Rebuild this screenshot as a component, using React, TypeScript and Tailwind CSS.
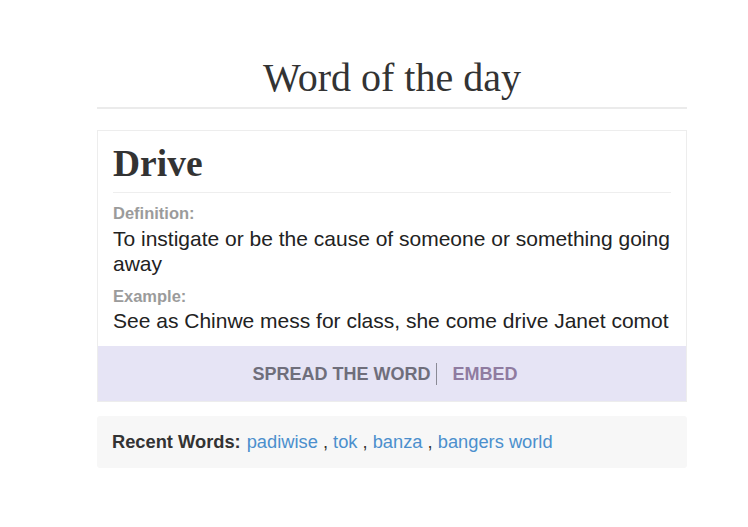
import React from "react";

export default function App() {
  const serif = { fontFamily: '"Liberation Serif", "DejaVu Serif", serif' };
  const sans = { fontFamily: '"Liberation Sans", Arial, sans-serif' };
  const recent = ["padiwise", "tok", "banza", "bangers world"];
  return (
    <div className="min-h-[527px] w-[748px] bg-white" style={sans}>
      <div className="ml-[97px] w-[590px] pt-[55px]">
        <h1
          className="text-center text-[40px] leading-[46px] font-normal text-[#333]"
          style={serif}
        >
          Word of the day
        </h1>
        <div className="mt-[6px] h-[2px] bg-[#ebebeb]" />

        <div className="mt-[21px] border border-[#ededed] bg-white">
          <div className="px-[15px] pt-[12px] pb-[13px]">
            <div className="border-b border-[#eeeeee] pb-[7px]">
              <h2
                className="text-[37.5px] leading-[42px] font-bold text-[#333]"
                style={serif}
              >
                Drive
              </h2>
            </div>
            <div className="mt-[10px] text-[16.5px] leading-[20px] font-bold text-[#9b9b9b]">
              Definition:
            </div>
            <p className="mt-[3px] text-[21px] leading-[25px] text-[#222]">
              To instigate or be the cause of someone or something going away
            </p>
            <div className="mt-[10px] text-[16.5px] leading-[20px] font-bold text-[#9b9b9b]">
              Example:
            </div>
            <p className="mt-[2px] text-[21px] leading-[25px] text-[#222]">
              See as Chinwe mess for class, she come drive Janet comot
            </p>
          </div>
          <div className="flex h-[55px] items-center justify-center bg-[#e6e4f5] pr-[14px] text-[18px] leading-[22px] font-bold">
            <span className="border-r border-[#8a8a95] pr-[5px] text-[#6f6e7b]">
              SPREAD THE WORD
            </span>
            <span className="ml-[16px] text-[#8f7ba0]">EMBED</span>
          </div>
        </div>

        <div className="mt-[14px] flex h-[52px] items-center rounded-[3px] bg-[#f7f7f7] px-[15px] text-[18.3px] leading-[22px]">
          <span className="font-bold text-[#333]">Recent Words:</span>
          <span className="ml-[6px] text-[#333] whitespace-pre">
            {recent.map((w, i) => (
              <React.Fragment key={w}>
                <a className="text-[#4b8fcd]" href="#">
                  {w}
                </a>
                {i < recent.length - 1 ? <span>{" , "}</span> : null}
              </React.Fragment>
            ))}
          </span>
        </div>
      </div>
    </div>
  );
}
